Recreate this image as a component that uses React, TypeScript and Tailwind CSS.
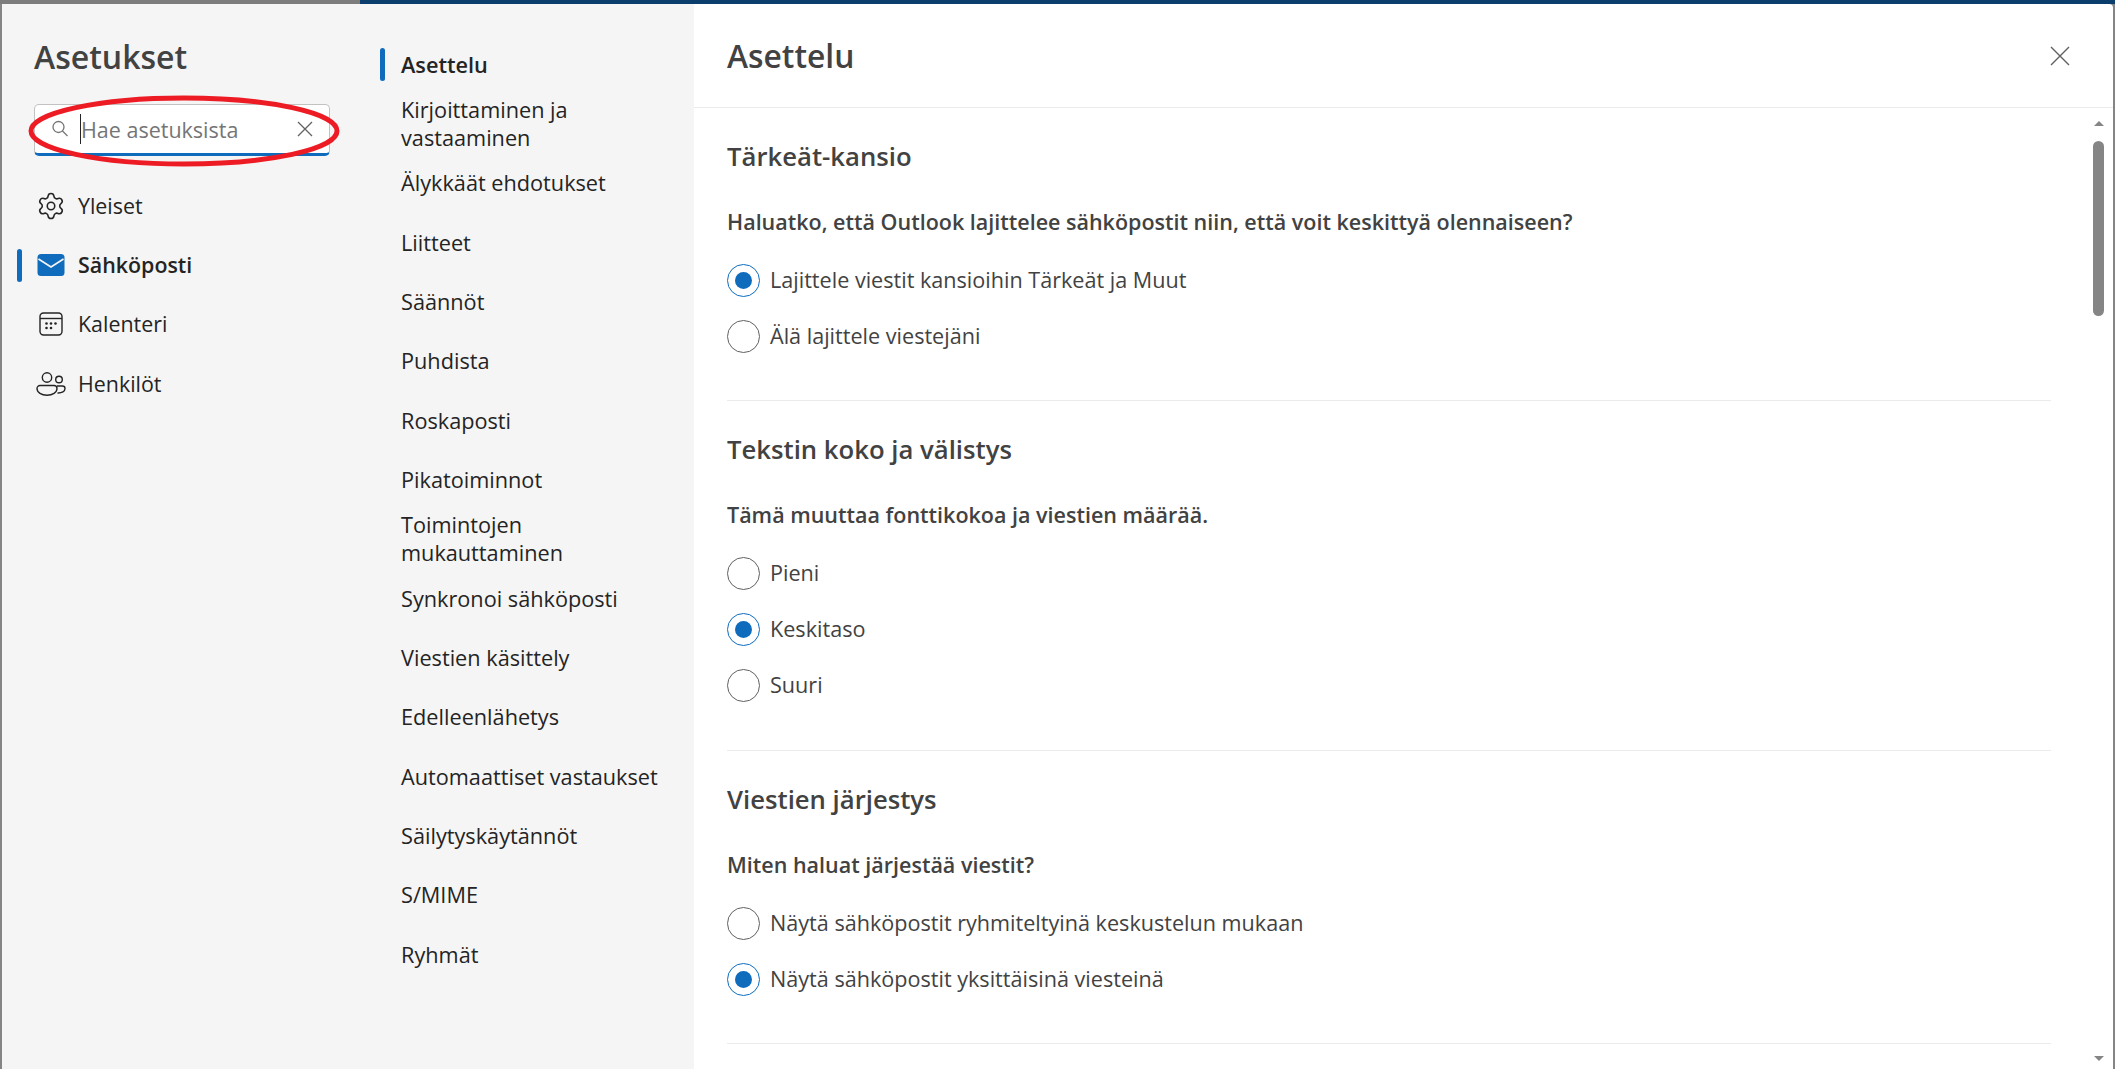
import { Settings } from "lucide-react";

const CATEGORIES = [
  { label: "Yleiset", icon: "gear" },
  { label: "Sähköposti", icon: "mail", active: true },
  { label: "Kalenteri", icon: "calendar" },
  { label: "Henkilöt", icon: "people" },
];

const SUBPAGES = [
  "Asettelu",
  "Kirjoittaminen ja vastaaminen",
  "Älykkäät ehdotukset",
  "Liitteet",
  "Säännöt",
  "Puhdista",
  "Roskaposti",
  "Pikatoiminnot",
  "Toimintojen mukauttaminen",
  "Synkronoi sähköposti",
  "Viestien käsittely",
  "Edelleenlähetys",
  "Automaattiset vastaukset",
  "Säilytyskäytännöt",
  "S/MIME",
  "Ryhmät",
];

const SECTIONS = [
  {
    title: "Tärkeät-kansio",
    question: "Haluatko, että Outlook lajittelee sähköpostit niin, että voit keskittyä olennaiseen?",
    options: [
      { label: "Lajittele viestit kansioihin Tärkeät ja Muut", checked: true },
      { label: "Älä lajittele viestejäni" },
    ],
  },
  {
    title: "Tekstin koko ja välistys",
    question: "Tämä muuttaa fonttikokoa ja viestien määrää.",
    options: [{ label: "Pieni" }, { label: "Keskitaso", checked: true }, { label: "Suuri" }],
  },
  {
    title: "Viestien järjestys",
    question: "Miten haluat järjestää viestit?",
    options: [
      { label: "Näytä sähköpostit ryhmiteltyinä keskustelun mukaan" },
      { label: "Näytä sähköpostit yksittäisinä viesteinä", checked: true },
    ],
  },
];

function CategoryIcon({ name }: { name: string }) {
  if (name === "gear") return <Settings size={30} strokeWidth={1.25} className="text-[#242424]" />;
  if (name === "mail") {
    return (
      <svg width="28" height="22" viewBox="0 0 28 22">
        <rect width="27" height="22" x="0.5" rx="3.5" fill="#0f6cbd" />
        <path d="M1.5 5 14 13 26.5 5" fill="none" stroke="#f5f5f5" strokeWidth="1.6" />
      </svg>
    );
  }
  if (name === "calendar") {
    return (
      <svg width="24" height="24" viewBox="0 0 24 24" fill="none" stroke="#242424" strokeWidth="1.4">
        <rect x="1" y="1" width="22" height="22" rx="3.5" />
        <path d="M1 6.5h22" />
        <g fill="#242424" stroke="none">
          <circle cx="7.5" cy="11.5" r="1.3" />
          <circle cx="12" cy="11.5" r="1.3" />
          <circle cx="16.5" cy="11.5" r="1.3" />
          <circle cx="7.5" cy="16" r="1.3" />
          <circle cx="12" cy="16" r="1.3" />
        </g>
      </svg>
    );
  }
  return (
    <svg width="30" height="24" viewBox="0 0 30 24" fill="none" stroke="#242424" strokeWidth="1.4">
      <circle cx="11" cy="5.5" r="4.7" />
      <circle cx="23" cy="7.5" r="3.3" />
      <path d="M4 13.5h14a3 3 0 0 1 3 3c0 4-4.5 6.7-10 6.7S1 20.5 1 16.5a3 3 0 0 1 3-3Z" />
      <path d="M21 14h5.5a2.5 2.5 0 0 1 2.5 2.500c0 3-3 4.700-7.500 4.500" />
    </svg>
  );
}

function Radio({ checked }: { checked?: boolean }) {
  return (
    <span
      className={`flex h-[33px] w-[33px] shrink-0 items-center justify-center rounded-full border ${
        checked ? "border-[#0f6cbd]" : "border-[#616161]"
      }`}
    >
      {checked && <span className="h-[17px] w-[17px] rounded-full bg-[#0f6cbd]" />}
    </span>
  );
}

export default function App() {
  return (
    <div className="relative flex h-[1069px] w-[2115px] flex-col overflow-hidden bg-[#858585] font-['Open_Sans',sans-serif]">
      <div className="flex h-[4px] shrink-0">
        <div className="w-[360px] bg-[#7d7d7d]" />
        <div className="flex-1 bg-[#0c3e6d]" />
      </div>
      <div className="flex min-h-0 flex-1 pl-[2px] pr-[2px]">
        <aside className="w-[358px] shrink-0 bg-[#f5f5f5]">
          <h1 className="pl-[32px] pt-[33px] text-[32px] leading-[40px] font-semibold text-[#424242]">Asetukset</h1>
          <div className="relative mx-[32px] mt-[27px] flex h-[52px] w-[296px] items-center rounded-[5px] border border-[#c2c2c2] border-b-[3px] border-b-[#0f6cbd] bg-white pl-[16px] pr-[16px]">
            <svg width="18" height="18" viewBox="0 0 18 18" fill="none" stroke="#757575" strokeWidth="1.3" className="shrink-0">
              <circle cx="7.500" cy="7" r="5.500" />
              <path d="m11.500 11 5 5" />
            </svg>
            <span className="ml-[11px] h-[30px] w-px shrink-0 bg-[#242424]" />
            <span className="flex-1 pt-[2px] text-[21.5px] text-[#757575]">Hae asetuksista</span>
            <svg width="16" height="16" viewBox="0 0 16 16" stroke="#616161" strokeWidth="1.3" className="shrink-0">
              <path d="m1 1 14 14M15 1 1 15" />
            </svg>
          </div>
          <nav className="mt-[20px]">
            {CATEGORIES.map((item) => (
              <div key={item.label} className="relative flex h-[59.33px] items-center pl-[33px]">
                {item.active && <span className="absolute left-[15px] top-[14px] h-[33px] w-[5px] rounded-full bg-[#0f6cbd]" />}
                <span className="flex w-[43px] shrink-0 items-center justify-center pr-[12px]">
                  <CategoryIcon name={item.icon} />
                </span>
                <span className={`text-[21.4px] ${item.active ? "font-semibold text-[#242424]" : "text-[#242424]"}`}>
                  {item.label}
                </span>
              </div>
            ))}
          </nav>
        </aside>
        <nav className="w-[334px] shrink-0 bg-[#f5f5f5] pt-[31px]">
          {SUBPAGES.map((label, index) => (
            <div key={label} className="relative flex h-[59.33px] items-center pl-[41px] pr-[20px]">
              {index === 0 && <span className="absolute left-[20px] top-[13px] h-[33px] w-[5px] rounded-full bg-[#0f6cbd]" />}
              <span className={`text-[21.7px] leading-[28px] ${index === 0 ? "font-semibold text-[#242424]" : "text-[#242424]"}`}>
                {label}
              </span>
            </div>
          ))}
        </nav>
        <main className="flex min-w-0 flex-1 flex-col rounded-tr-[4px] bg-white">
          <header className="flex h-[104px] shrink-0 items-center justify-between border-b border-[#ebebeb] pl-[33px] pr-[43px]">
            <h2 className="text-[31.8px] font-semibold text-[#424242]">Asettelu</h2>
            <svg width="20" height="20" viewBox="0 0 20 20" stroke="#616161" strokeWidth="1.4">
              <path d="m1 1 18 18M19 1 1 19" />
            </svg>
          </header>
          <div className="flex min-h-0 flex-1">
            <div className="min-w-0 flex-1 overflow-hidden pl-[33px] pr-[42px]">
              {SECTIONS.map((section) => (
                <section key={section.title} className="h-[347px] border-b border-[#ebebeb] pt-[29px] first:h-[293px] nth-2:h-[350px] nth-3:h-[293px]">
                  <h3 className="text-[25.7px] leading-[40px] font-semibold text-[#424242]">{section.title}</h3>
                  <p className="mt-[31px] text-[21.5px] leading-[28px] font-semibold text-[#424242]">{section.question}</p>
                  <div className="mt-[16px] flex flex-col">
                    {section.options.map((option) => (
                      <label key={option.label} className="flex h-[56px] items-center gap-[10px]">
                        <Radio checked={option.checked} />
                        <span className="text-[21.6px] text-[#424242]">{option.label}</span>
                      </label>
                    ))}
                  </div>
                </section>
              ))}
            </div>
            <div className="flex w-[20px] shrink-0 flex-col items-center pr-[9px] pt-[13px] pb-[8px]">
              <span className="h-0 w-0 border-x-[5px] border-b-[5px] border-x-transparent border-b-[#858585]" />
              <span className="mt-[15px] h-[175px] w-[11px] rounded-full bg-[#858585]" />
              <span className="mt-auto h-0 w-0 border-x-[5px] border-t-[5px] border-x-transparent border-t-[#858585]" />
            </div>
          </div>
        </main>
      </div>
      <svg width="320" height="76" viewBox="0 0 320 76" fill="none" className="absolute left-[24px] top-[93px]">
        <ellipse cx="160" cy="38" rx="153" ry="33" stroke="#ed1c24" strokeWidth="5" />
      </svg>
    </div>
  );
}
